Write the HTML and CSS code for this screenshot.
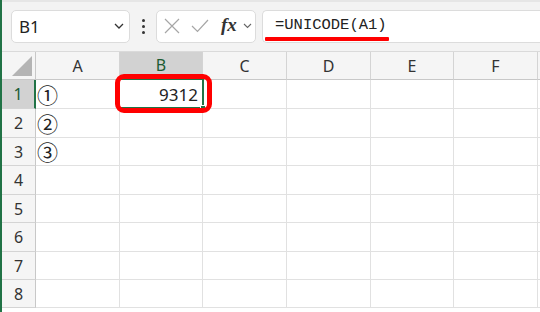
FILE: index.html
```html
<!doctype html>
<html lang="ja">
<head>
	<meta charset="UTF-8">
	<title>UNICODE</title>
	<link rel="stylesheet" href="styles.css">
</head>
<body>
<div class="app">
	<div class="bar">
		<div class="namebox">
			<span class="ref">B1</span>
			<svg class="chev" width="10" height="6" viewBox="0 0 10 6"><path d="M1 1 L5 5 L9 1" fill="none" stroke="#333" stroke-width="1.3"/></svg>
		</div>
		<div class="dots"><i></i><i></i><i></i></div>
		<div class="fnbox">
			<svg width="16" height="16" viewBox="0 0 16 16"><path d="M1 1 L15 15 M15 1 L1 15" stroke="#a6a6a6" stroke-width="1.2"/></svg>
			<svg width="18" height="14" viewBox="0 0 18 14"><path d="M1 7 L6.5 12.5 L17 1" fill="none" stroke="#a6a6a6" stroke-width="1.2"/></svg>
			<span class="fx">fx</span>
			<svg class="chev" width="9" height="6" viewBox="0 0 9 6"><path d="M1 1 L4.5 4.5 L8 1" fill="none" stroke="#666" stroke-width="1.1"/></svg>
		</div>
		<div class="formula"><span class="ftext">=UNICODE(A1)</span></div>
	</div>

	<div class="sheet">
		<div class="grid">
			<div class="hd corner"><span class="tri"></span></div>
			<div class="hd">A</div>
			<div class="hd sel-col">B</div>
			<div class="hd">C</div>
			<div class="hd">D</div>
			<div class="hd">E</div>
			<div class="hd">F</div>
			<div class="hd"></div>

			<div class="rh sel-row">1</div>
			<div class="c circ">①</div><div class="c num">9312</div><div class="c"></div><div class="c"></div><div class="c"></div><div class="c"></div><div class="c"></div>
			<div class="rh">2</div>
			<div class="c circ">②</div><div class="c"></div><div class="c"></div><div class="c"></div><div class="c"></div><div class="c"></div><div class="c"></div>
			<div class="rh">3</div>
			<div class="c circ">③</div><div class="c"></div><div class="c"></div><div class="c"></div><div class="c"></div><div class="c"></div><div class="c"></div>
			<div class="rh">4</div>
			<div class="c"></div><div class="c"></div><div class="c"></div><div class="c"></div><div class="c"></div><div class="c"></div><div class="c"></div>
			<div class="rh">5</div>
			<div class="c"></div><div class="c"></div><div class="c"></div><div class="c"></div><div class="c"></div><div class="c"></div><div class="c"></div>
			<div class="rh">6</div>
			<div class="c"></div><div class="c"></div><div class="c"></div><div class="c"></div><div class="c"></div><div class="c"></div><div class="c"></div>
			<div class="rh">7</div>
			<div class="c"></div><div class="c"></div><div class="c"></div><div class="c"></div><div class="c"></div><div class="c"></div><div class="c"></div>
			<div class="rh">8</div>
			<div class="c"></div><div class="c"></div><div class="c"></div><div class="c"></div><div class="c"></div><div class="c"></div><div class="c"></div>
		</div>
		<div class="selbox"><span class="handle"></span></div>
		<div class="mark"></div>
	</div>
</div>
</body>
</html>
```

FILE: styles.css
```css
* {
	margin: 0;
	padding: 0;
	box-sizing: border-box;
}
html, body {
	width: 540px;
	height: 312px;
	overflow: hidden;
	background: #fff;
	font-family: "Noto Sans", "Noto Sans CJK JP", sans-serif;
	color: #222;
}

.app {
	border-left: 2px solid #217346;
	height: 312px;
}

/* formula bar */
.bar {
	height: 51px;
	background: #f3f3f3;
	border-top: 2px solid #e6e6e6;
	display: flex;
	align-items: center;
	padding-left: 9px;
	padding-bottom: 1px;
}
.namebox {
	width: 119px;
	height: 33px;
	background: #fff;
	border: 1px solid #dcdcdc;
	border-radius: 5px;
	display: flex;
	align-items: center;
	justify-content: space-between;
	padding: 0 5px 0 7px;
}
.ref {
	font-size: 17px;
	color: #222;
}
.dots {
	width: 26px;
	display: flex;
	flex-direction: column;
	align-items: center;
	gap: 3px;
}
.dots i {
	width: 3px;
	height: 3px;
	background: #333;
	border-radius: 50%;
}
.fnbox {
	width: 100px;
	height: 33px;
	background: #fff;
	border: 1px solid #dcdcdc;
	border-radius: 5px;
	display: flex;
	align-items: center;
	padding-left: 7px;
}
.fnbox svg:nth-child(1) {
	margin-right: 11px;
}
.fnbox svg:nth-child(2) {
	margin-right: 12px;
}
.fx {
	font-family: "Liberation Serif", "DejaVu Serif", serif;
	font-style: italic;
	font-weight: bold;
	font-size: 19px;
	color: #333;
	margin-right: 6px;
	margin-top: -2px;
}
.formula {
	flex: 1;
	height: 33px;
	margin-left: 6px;
	background: #fff;
	border: 1px solid #dcdcdc;
	border-right: none;
	border-radius: 5px 0 0 5px;
	display: flex;
	align-items: center;
	padding-left: 12px;
	position: relative;
}
.ftext {
	font-family: "Liberation Mono", "DejaVu Sans Mono", monospace;
	font-size: 15.5px;
	color: #222;
	position: relative;
	top: -1px;
}
.formula::after {
	content: "";
	position: absolute;
	left: 2px;
	top: 26px;
	width: 124px;
	height: 4px;
	background: #f00;
	border-radius: 1px;
}

/* sheet */
.sheet {
	position: relative;
}
.grid {
	display: grid;
	grid-template-columns: 34px 84px 83px 84px 84px 83px 84px 1fr;
	grid-template-rows: 28px 29px 29px 28px 29px 28px 29px 28px 28px;
	border-top: 1px solid #dadada;
}
.hd {
	background: #f5f5f5;
	border-right: 1px solid #d4d4d4;
	border-bottom: 1px solid #c8c8c8;
	font-size: 16px;
	color: #333;
	display: flex;
	align-items: center;
	justify-content: center;
}
.corner {
	position: relative;
	border-right: 1px solid #c8c8c8;
}
.tri {
	position: absolute;
	right: 3px;
	bottom: 3px;
	width: 0;
	height: 0;
	border-left: 20px solid transparent;
	border-bottom: 20px solid #b4b4b4;
}
.hd.sel-col {
	background: #d2d2d2;
	border-bottom: 2px solid #217346;
	color: #1c5c34;
}
.rh {
	background: #f5f5f5;
	border-right: 1px solid #c8c8c8;
	border-bottom: 1px solid #d4d4d4;
	font-size: 16px;
	color: #333;
	display: flex;
	align-items: center;
	justify-content: center;
}
.rh.sel-row {
	background: #d2d2d2;
	border-right: 2px solid #217346;
	color: #1c5c34;
}
.c {
	border-right: 1px solid #e1e1e1;
	border-bottom: 1px solid #e1e1e1;
	font-size: 17px;
	display: flex;
	align-items: center;
	padding-left: 3px;
	color: #222;
}
.c.circ {
	font-family: "Noto Sans CJK JP", sans-serif;
	font-size: 21px;
	line-height: 1;
	padding-left: 1px;
}
.c.num {
	justify-content: flex-end;
	padding-right: 4px;
}

/* selected cell and annotation */
.selbox {
	position: absolute;
	left: 116px;
	top: 27px;
	width: 86px;
	height: 31px;
	border: 2px solid #217346;
}
.handle {
	position: absolute;
	right: -4px;
	bottom: -4px;
	width: 6px;
	height: 6px;
	background: #217346;
	border: 1px solid #fff;
}
.mark {
	position: absolute;
	left: 113px;
	top: 23px;
	width: 97px;
	height: 39px;
	border: 5px solid #f00;
	border-radius: 9px;
}
```
